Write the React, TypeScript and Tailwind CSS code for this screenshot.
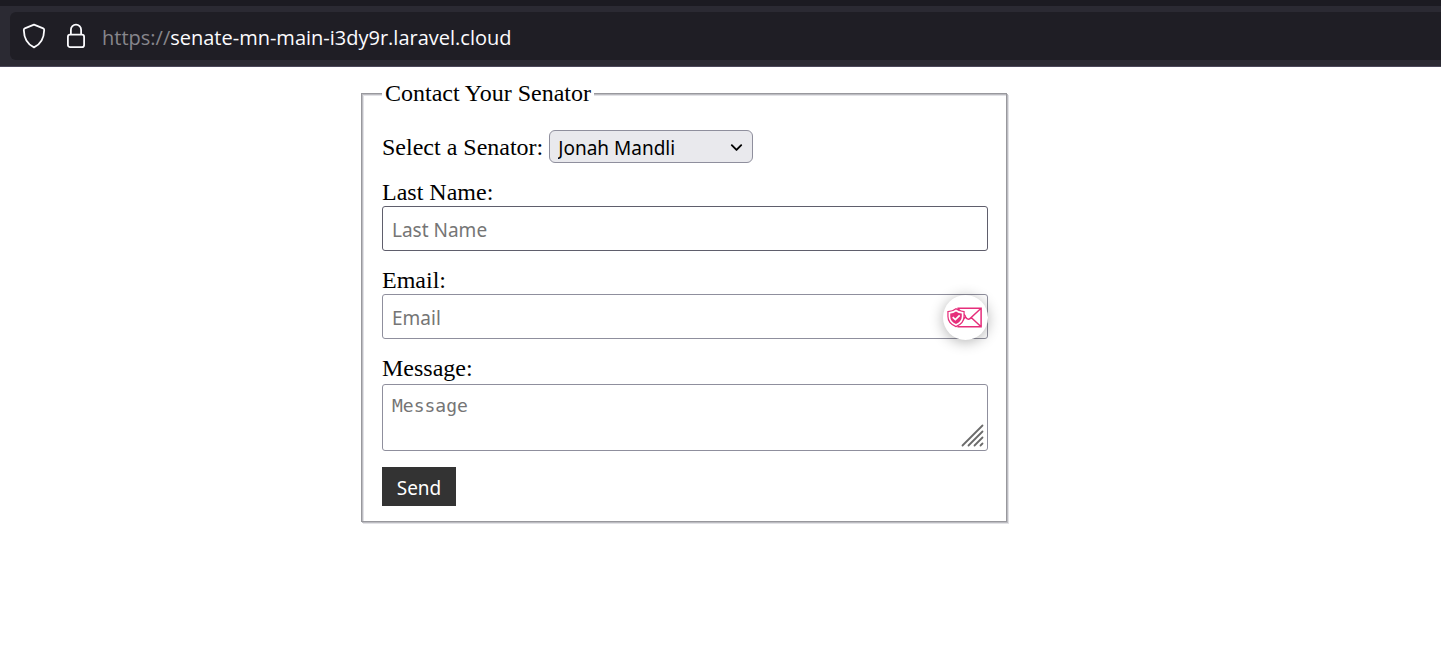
import React from "react";

function BrowserBar() {
  return (
    <header className="flex flex-col border-b border-[#4a4759] bg-[#2b2a33] font-['Open_Sans',sans-serif]">
      <div className="h-[6px] bg-[#1c1b22]" />
      <div className="my-[6px] ml-[10px] flex h-12 items-center rounded-l-md bg-[#1f1e25] pl-3 text-[#fbfbfe]">
        <svg width="24" height="26" viewBox="0 0 24 26" fill="none" stroke="currentColor" strokeWidth="1.8" strokeLinejoin="round" aria-hidden="true">
          <path d="M12 1.6 21.2 5.4Q22.2 5.8 22.2 7C22 15.5 18.2 21.5 12 24.4 5.800 21.5 2 15.500 1.800 7Q1.800 5.800 2.800 5.400Z" />
        </svg>
        <svg className="ml-[20px]" width="20" height="26" viewBox="0 0 20 26" fill="none" stroke="currentColor" strokeWidth="1.8" aria-hidden="true">
          <rect x="1.900" y="11.600" width="16.200" height="12.500" rx="2.200" />
          <path d="M4.900 11.600V6.700a5.100 5.100 0 0 1 10.200 0v4.900" />
        </svg>
        <span className="ml-4 pt-[3px] text-[20px] leading-6">
          <span className="text-[#87868c]">https://</span>senate-mn-main-i3dy9r.laravel.cloud
        </span>
      </div>
    </header>
  );
}

function MailBadge() {
  return (
    <button
      type="button"
      aria-label="Protect email address"
      className="absolute top-px right-0 flex size-[45px] items-center justify-center rounded-full bg-white pr-px shadow-[0_2px_14px_rgba(0,0,0,0.3)]"
    >
      <svg width="36" height="23" viewBox="0 0 38 24" fill="none" stroke="#e62e7b" aria-hidden="true">
        <path d="M11 2.200H36V21.800H11M36 2.200 25.500 12M36 21.800 25.500 12M11 2.200 19.500 10.500M15 16 19.500 11.500Q22.500 16 25.500 12" strokeWidth="1.600" />
        <path d="M9.500 2.800C12 4.800 14.500 5.600 18 5.800V11C18 16 14.500 19.600 9.500 21.600 4.500 19.600 1 16 1 11V5.800C4.500 5.600 7 4.800 9.500 2.800Z" fill="#fff" strokeWidth="1.300" />
        <path d="M9.500 5.600C11.500 7 13.200 7.600 15.600 7.800V11C15.600 14.700 13.200 17.200 9.500 18.900 5.800 17.200 3.400 14.700 3.400 11V7.800C5.800 7.600 7.500 7 9.500 5.600Z" fill="#e62e7b" stroke="none" />
        <path d="m6 11.600 2.800 2.700 4.600-4.600" stroke="#fff" strokeWidth="1.800" />
      </svg>
    </button>
  );
}

export default function App() {
  return (
    <div className="min-h-screen bg-white">
      <BrowserBar />
      <main className="pt-[13px] pl-[361px] font-['Liberation_Serif',serif] text-[24px] leading-[27px] text-black">
        <form className="w-full max-w-[646px]" onSubmit={(e) => e.preventDefault()}>
          <fieldset className="border border-[#98989d] pr-[18px] pb-[15px] pl-5 shadow-[inset_1px_1px_0_#bcbcc1,inset_2px_2px_0_#e2e2e6,1px_1px_0_#bcbcc1,2px_2px_0_#e2e2e6]">
            <legend className="bg-white px-[3px] leading-[26px]">Contact Your Senator</legend>
            <div className="flex flex-col gap-4 pt-6">
              <div className="flex items-center gap-[6px]">
                <label htmlFor="senator" className="pt-px">Select a Senator:</label>
                <div className="relative w-[204px]">
                  <select
                    id="senator"
                    className="block h-[33px] w-full appearance-none rounded-md border border-[#8f8f9d] bg-[#e9e9ed] pt-[2px] pl-2 font-['Noto_Sans',sans-serif] text-[19px] leading-6"
                  >
                    <option>Jonah Mandli</option>
                  </select>
                  <svg className="pointer-events-none absolute top-[13px] right-[10px]" width="13" height="9" viewBox="0 0 13 9" fill="none" stroke="#000" strokeWidth="1.900" strokeLinecap="round" strokeLinejoin="round" aria-hidden="true">
                    <path d="m1.800 2.200 4.700 4.700 4.700-4.700" />
                  </svg>
                </div>
              </div>
              <div>
                <label htmlFor="lastName" className="block">Last Name:</label>
                <input
                  id="lastName"
                  type="text"
                  placeholder="Last Name"
                  className="block h-[45px] w-full rounded-[3px] border border-[#5f5e6c] bg-white px-[9px] pt-[2px] font-['Noto_Sans',sans-serif] text-[19px] placeholder:text-[#757575]"
                />
              </div>
              <div>
                <label htmlFor="email" className="block">Email:</label>
                <div className="relative">
                  <input
                    id="email"
                    type="email"
                    placeholder="Email"
                    className="block h-[45px] w-full rounded-[3px] border border-[#8f8f9d] bg-white px-[9px] pt-[2px] font-['Noto_Sans',sans-serif] text-[19px] placeholder:text-[#757575]"
                  />
                  <MailBadge />
                </div>
              </div>
              <div>
                <label htmlFor="message" className="block pb-[2px]">Message:</label>
                <div className="relative">
                  <textarea
                    id="message"
                    placeholder="Message"
                    className="block h-[67px] w-full resize-none rounded-[3px] border border-[#8f8f9d] bg-white px-[9px] py-[9px] font-['DejaVu_Sans_Mono',monospace] text-[18px] leading-6 placeholder:text-[#757575]"
                  />
                  <svg className="pointer-events-none absolute right-[4px] bottom-[4px]" width="23" height="23" viewBox="0 0 23 23" stroke="#6b6b6b" strokeWidth="1.800" strokeLinecap="round" aria-hidden="true">
                    <path d="M1.500 21.500 21.500 1.500M7.500 21.500 21.500 7.500M13.500 21.500 21.500 13.500M19.500 21.500 21.500 19.500" />
                  </svg>
                </div>
              </div>
              <button
                type="submit"
                className="h-[39px] w-[74px] bg-[#333333] pt-[2px] font-['Noto_Sans',sans-serif] text-[19px] leading-6 text-white"
              >
                Send
              </button>
            </div>
          </fieldset>
        </form>
      </main>
    </div>
  );
}
